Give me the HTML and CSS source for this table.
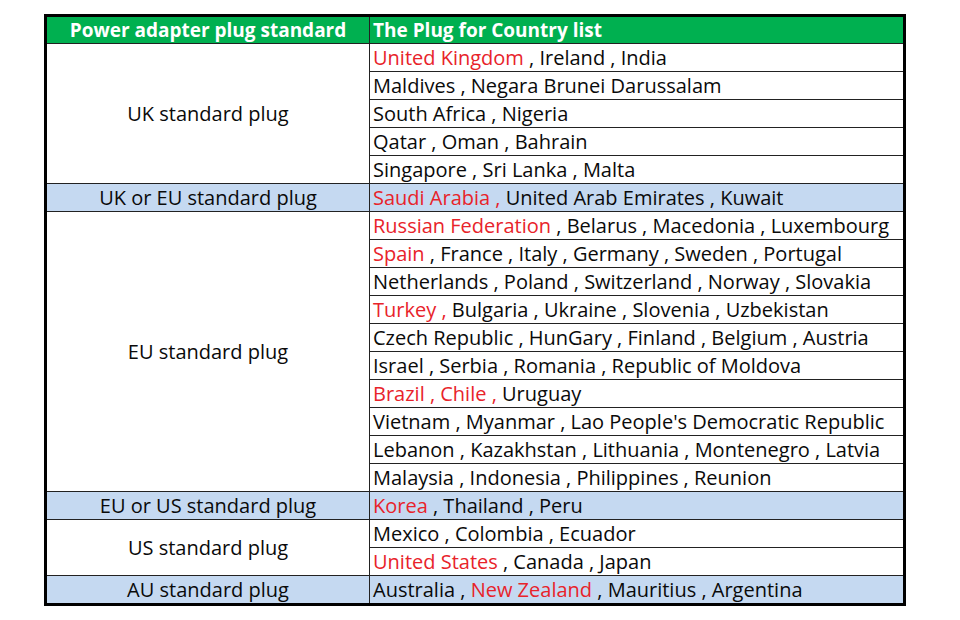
FILE: index.html
```html
<!DOCTYPE html>
<html>
<head>
<meta charset="utf-8">
<link rel="stylesheet" href="styles.css">
</head>
<body>
<div class="page">
<table class="plug">
<colgroup><col class="c1"><col class="c2"></colgroup>
<tr class="head"><th class="std">Power adapter plug standard</th><th class="list">The Plug for Country list</th></tr>
<tr><td class="std" rowspan="5">UK standard plug</td><td><span class="r">United Kingdom</span> , Ireland , India</td></tr>
<tr><td>Maldives , Negara Brunei Darussalam</td></tr>
<tr><td>South Africa , Nigeria</td></tr>
<tr><td>Qatar , Oman , Bahrain</td></tr>
<tr><td>Singapore , Sri Lanka , Malta</td></tr>
<tr class="blue"><td class="std">UK or EU standard plug</td><td><span class="r">Saudi Arabia ,</span> United Arab Emirates , Kuwait</td></tr>
<tr><td class="std" rowspan="10">EU standard plug</td><td><span class="r">Russian Federation</span> , Belarus , Macedonia , Luxembourg</td></tr>
<tr><td><span class="r">Spain</span> , France , Italy , Germany , Sweden , Portugal</td></tr>
<tr><td>Netherlands , Poland , Switzerland , Norway , Slovakia</td></tr>
<tr><td><span class="r">Turkey ,</span> Bulgaria , Ukraine , Slovenia , Uzbekistan</td></tr>
<tr><td>Czech Republic , HunGary , Finland , Belgium , Austria</td></tr>
<tr><td>Israel , Serbia , Romania , Republic of Moldova</td></tr>
<tr><td><span class="r">Brazil , Chile ,</span> Uruguay</td></tr>
<tr><td>Vietnam , Myanmar , Lao People's Democratic Republic</td></tr>
<tr><td>Lebanon , Kazakhstan , Lithuania , Montenegro , Latvia</td></tr>
<tr><td>Malaysia , Indonesia , Philippines , Reunion</td></tr>
<tr class="blue"><td class="std">EU or US standard plug</td><td><span class="r">Korea</span> , Thailand , Peru</td></tr>
<tr><td class="std" rowspan="2">US standard plug</td><td>Mexico , Colombia , Ecuador</td></tr>
<tr><td><span class="r">United States</span> , Canada , Japan</td></tr>
<tr class="blue"><td class="std">AU standard plug</td><td>Australia , <span class="r">New Zealand</span> , Mauritius , Argentina</td></tr>
</table>
</div>
</body>
</html>
```
FILE: styles.css
```css
html, body { margin: 0; padding: 0; background: #fff; }
.page { padding: 14px 0 0 44px; }
.plug {
  border-collapse: collapse;
  border: 3px solid #000;
  font-family: "Open Sans", sans-serif;
  font-size: 20px;
  color: #0a0a0a;
  table-layout: fixed;
  width: 859px;
}
.c1 { width: 324px; }
.c2 { width: 535px; }
.plug th, .plug td {
  border: 1px solid #222;
  height: 27px;
  padding: 0 3px;
  line-height: 26px;
  white-space: nowrap;
  overflow: hidden;
}
.head th {
  background: #00b050;
  color: #fff;
  font-weight: bold;
  font-size: 19px;
  height: 26px;
}
.plug th.list { text-align: left; }
.plug td.std { text-align: center; }
.blue td { background: #c5d9f1; }
.r { color: #e8232a; }
```
